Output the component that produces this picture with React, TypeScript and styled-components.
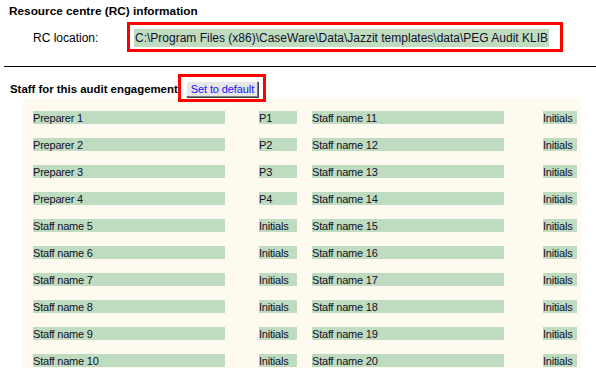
import styled, { createGlobalStyle } from "styled-components";

const GlobalStyle = createGlobalStyle`
  html, body {
    margin: 0;
    padding: 0;
    background: #ffffff;
  }
  body {
    font-family: "Liberation Sans", Arial, sans-serif;
    font-size: 12px;
    color: #000000;
  }
`;

const StyledPage = styled.div`
  width: 596px;
  height: 379px;
  overflow: hidden;
  display: flex;
  flex-direction: column;
`;

const StyledSectionTitle = styled.div`
  font-weight: bold;
  font-size: 11.8px;
  line-height: 14px;
  padding-left: 9px;
  margin-top: 4px;
`;

const StyledLocationRow = styled.div`
  display: flex;
  align-items: baseline;
  margin-top: 4px;
`;

const StyledLocationLabel = styled.span`
  width: 94px;
  padding-left: 33px;
  line-height: 14px;
`;

// red annotation frame drawn over the form
const StyledHighlight = styled.div`
  border: 3px solid #ff0000;
  display: flex;
  position: relative;
  z-index: 1;
`;

const StyledLocationBox = styled(StyledHighlight)`
  width: 426px;
  height: 22px;
  padding: 0 0 2px 4px;
  align-items: flex-end;
`;

const StyledLocationField = styled.span`
  background: #c0dcc0;
  color: #10102a;
  line-height: 18px;
  padding: 0 1px;
  white-space: nowrap;
`;

const StyledDivider = styled.hr`
  border: none;
  border-top: 1px solid #000000;
  margin: 14px 0 0 4px;
  height: 0;
`;

const StyledStaffHeader = styled.div`
  display: flex;
  align-items: center;
  margin-top: 7px;
  padding-left: 10px;
  height: 28px;
`;

const StyledStaffTitle = styled.span`
  font-weight: bold;
  font-size: 11.4px;
  line-height: 14px;
  margin-top: 2px;
`;

const StyledButtonBox = styled(StyledHighlight)`
  width: 77px;
  height: 18px;
  padding: 4px 0 0 5px;
  align-items: flex-start;
`;

const StyledDefaultButton = styled.button`
  font-family: inherit;
  font-size: 11px;
  letter-spacing: -0.1px;
  line-height: 12px;
  color: #1414ff;
  background: #e6e6e6;
  border: 1px solid;
  border-color: #ffffff #7a7a7a #7a7a7a #ffffff;
  box-shadow: 1px 1px 0 #404040;
  box-sizing: border-box;
  width: 72px;
  height: 16px;
  padding: 0 0 0 4px;
  text-align: left;
  cursor: default;
`;

const StyledStaffPanel = styled.div`
  margin: -4px 0 0 23px;
  width: 548px;
  height: 257px;
  padding: 13px 0 0 10px;
  background: #fffaf0;
  display: grid;
  grid-template-columns: 264px 265px;
  grid-auto-rows: 13px;
  column-gap: 15px;
  row-gap: 14px;
`;

const StyledStaffEntry = styled.div`
  display: flex;
  justify-content: space-between;
`;

const StyledField = styled.span<{ $width: number }>`
  width: ${({ $width }) => $width}px;
  height: 12px;
  padding-top: 1px;
  line-height: 13px;
  font-size: 11px;
  letter-spacing: -0.2px;
  background: #c0dcc0;
  color: #10102a;
  white-space: nowrap;
  overflow: hidden;
`;

type StaffEntry = { name: string; initials: string };

const leftStaff: StaffEntry[] = [
  { name: "Preparer 1", initials: "P1" },
  { name: "Preparer 2", initials: "P2" },
  { name: "Preparer 3", initials: "P3" },
  { name: "Preparer 4", initials: "P4" },
  ...[5, 6, 7, 8, 9, 10].map((n) => ({
    name: `Staff name ${n}`,
    initials: "Initials",
  })),
];

const rightStaff: StaffEntry[] = Array.from({ length: 10 }, (_, i) => ({
  name: `Staff name ${i + 11}`,
  initials: "Initials",
}));

export default function App() {
  return (
    <>
      <GlobalStyle />
      <StyledPage>
        <StyledSectionTitle>Resource centre (RC) information</StyledSectionTitle>
        <StyledLocationRow>
          <StyledLocationLabel>RC location:</StyledLocationLabel>
          <StyledLocationBox>
            <StyledLocationField>
              C:\Program Files (x86)\CaseWare\Data\Jazzit templates\data\PEG Audit KLIB
            </StyledLocationField>
          </StyledLocationBox>
        </StyledLocationRow>
        <StyledDivider />
        <StyledStaffHeader>
          <StyledStaffTitle>Staff for this audit engagement</StyledStaffTitle>
          <StyledButtonBox>
            <StyledDefaultButton>Set to default</StyledDefaultButton>
          </StyledButtonBox>
        </StyledStaffHeader>
        <StyledStaffPanel>
          {leftStaff.map((left, i) => {
            const right = rightStaff[i];
            return [
              <StyledStaffEntry key={`l${i}`}>
                <StyledField $width={192}>{left.name}</StyledField>
                <StyledField $width={38}>{left.initials}</StyledField>
              </StyledStaffEntry>,
              <StyledStaffEntry key={`r${i}`}>
                <StyledField $width={192}>{right.name}</StyledField>
                <StyledField $width={34}>{right.initials}</StyledField>
              </StyledStaffEntry>,
            ];
          })}
        </StyledStaffPanel>
      </StyledPage>
    </>
  );
}
